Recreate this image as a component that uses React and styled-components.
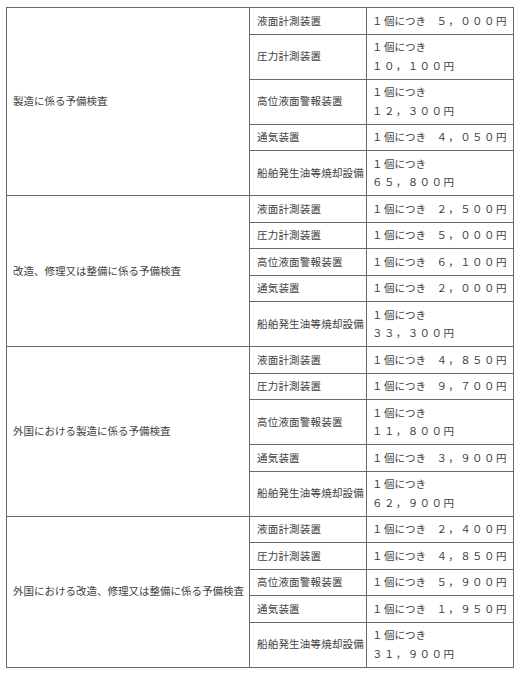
import styled, { createGlobalStyle } from 'styled-components';

const GlobalStyle = createGlobalStyle`
    body {
        margin: 7px 6px;
        background: #ffffff;
        font-family: 'Noto Sans CJK JP', 'Noto Sans', sans-serif;
    }
`;

const devices = ['液面計測装置', '圧力計測装置', '高位液面警報装置', '通気装置', '船舶発生油等焼却設備'];

const groups = [
    { title: '製造に係る予備検査', fees: ['５，０００', '１０，１００', '１２，３００', '４，０５０', '６５，８００'] },
    { title: '改造、修理又は整備に係る予備検査', fees: ['２，５００', '５，０００', '６，１００', '２，０００', '３３，３００'] },
    { title: '外国における製造に係る予備検査', fees: ['４，８５０', '９，７００', '１１，８００', '３，９００', '６２，９００'] },
    { title: '外国における改造、修理又は整備に係る予備検査', fees: ['２，４００', '４，８５０', '５，９００', '１，９５０', '３１，９００'] },
];

const App = () => {
    return (
        <>
            <GlobalStyle />
            <Table>
                <colgroup>
                    <col style={{ width: 243 }} />
                    <col style={{ width: 117 }} />
                    <col style={{ width: 147 }} />
                </colgroup>
                <tbody>
                    {groups.map(group =>
                        devices.map((device, i) => {
                            const fee = group.fees[i];
                            const long = fee.length > 5;
                            return (
                                <tr key={group.title + device}>
                                    {i === 0 && <TitleCell rowSpan={devices.length}>{group.title}</TitleCell>}
                                    <Cell>{device}</Cell>
                                    <FeeCell>
                                        <Amount>１</Amount>
                                        <Line>個につき</Line>
                                        {long ? <br /> : <Line>　</Line>}
                                        <Amount>{fee}</Amount>
                                        <Line>円</Line>
                                    </FeeCell>
                                </tr>
                            );
                        })
                    )}
                </tbody>
            </Table>
        </>
    );
};

const Table = styled.table`
    width: 507px;
    border-collapse: collapse;
    table-layout: fixed;
    font-size: 10.5px;
    line-height: 18.5px;
    color: #404040;
`;
const Cell = styled.td`
    border: 1px solid #6a6a6a;
    padding: 3.5px 6px 3.5px 7px;
    vertical-align: middle;
    white-space: nowrap;
    overflow: hidden;
    letter-spacing: 0.2px;
`;
const TitleCell = styled(Cell)`
    padding-left: 6px;
    letter-spacing: 0;
`;
const FeeCell = styled(Cell)`
    padding-left: 5px;
    letter-spacing: 0;
`;
const Line = styled.span`
    white-space: nowrap;
`;
const Amount = styled.span`
    letter-spacing: 1.4px;
    white-space: nowrap;
`;

export default App;
